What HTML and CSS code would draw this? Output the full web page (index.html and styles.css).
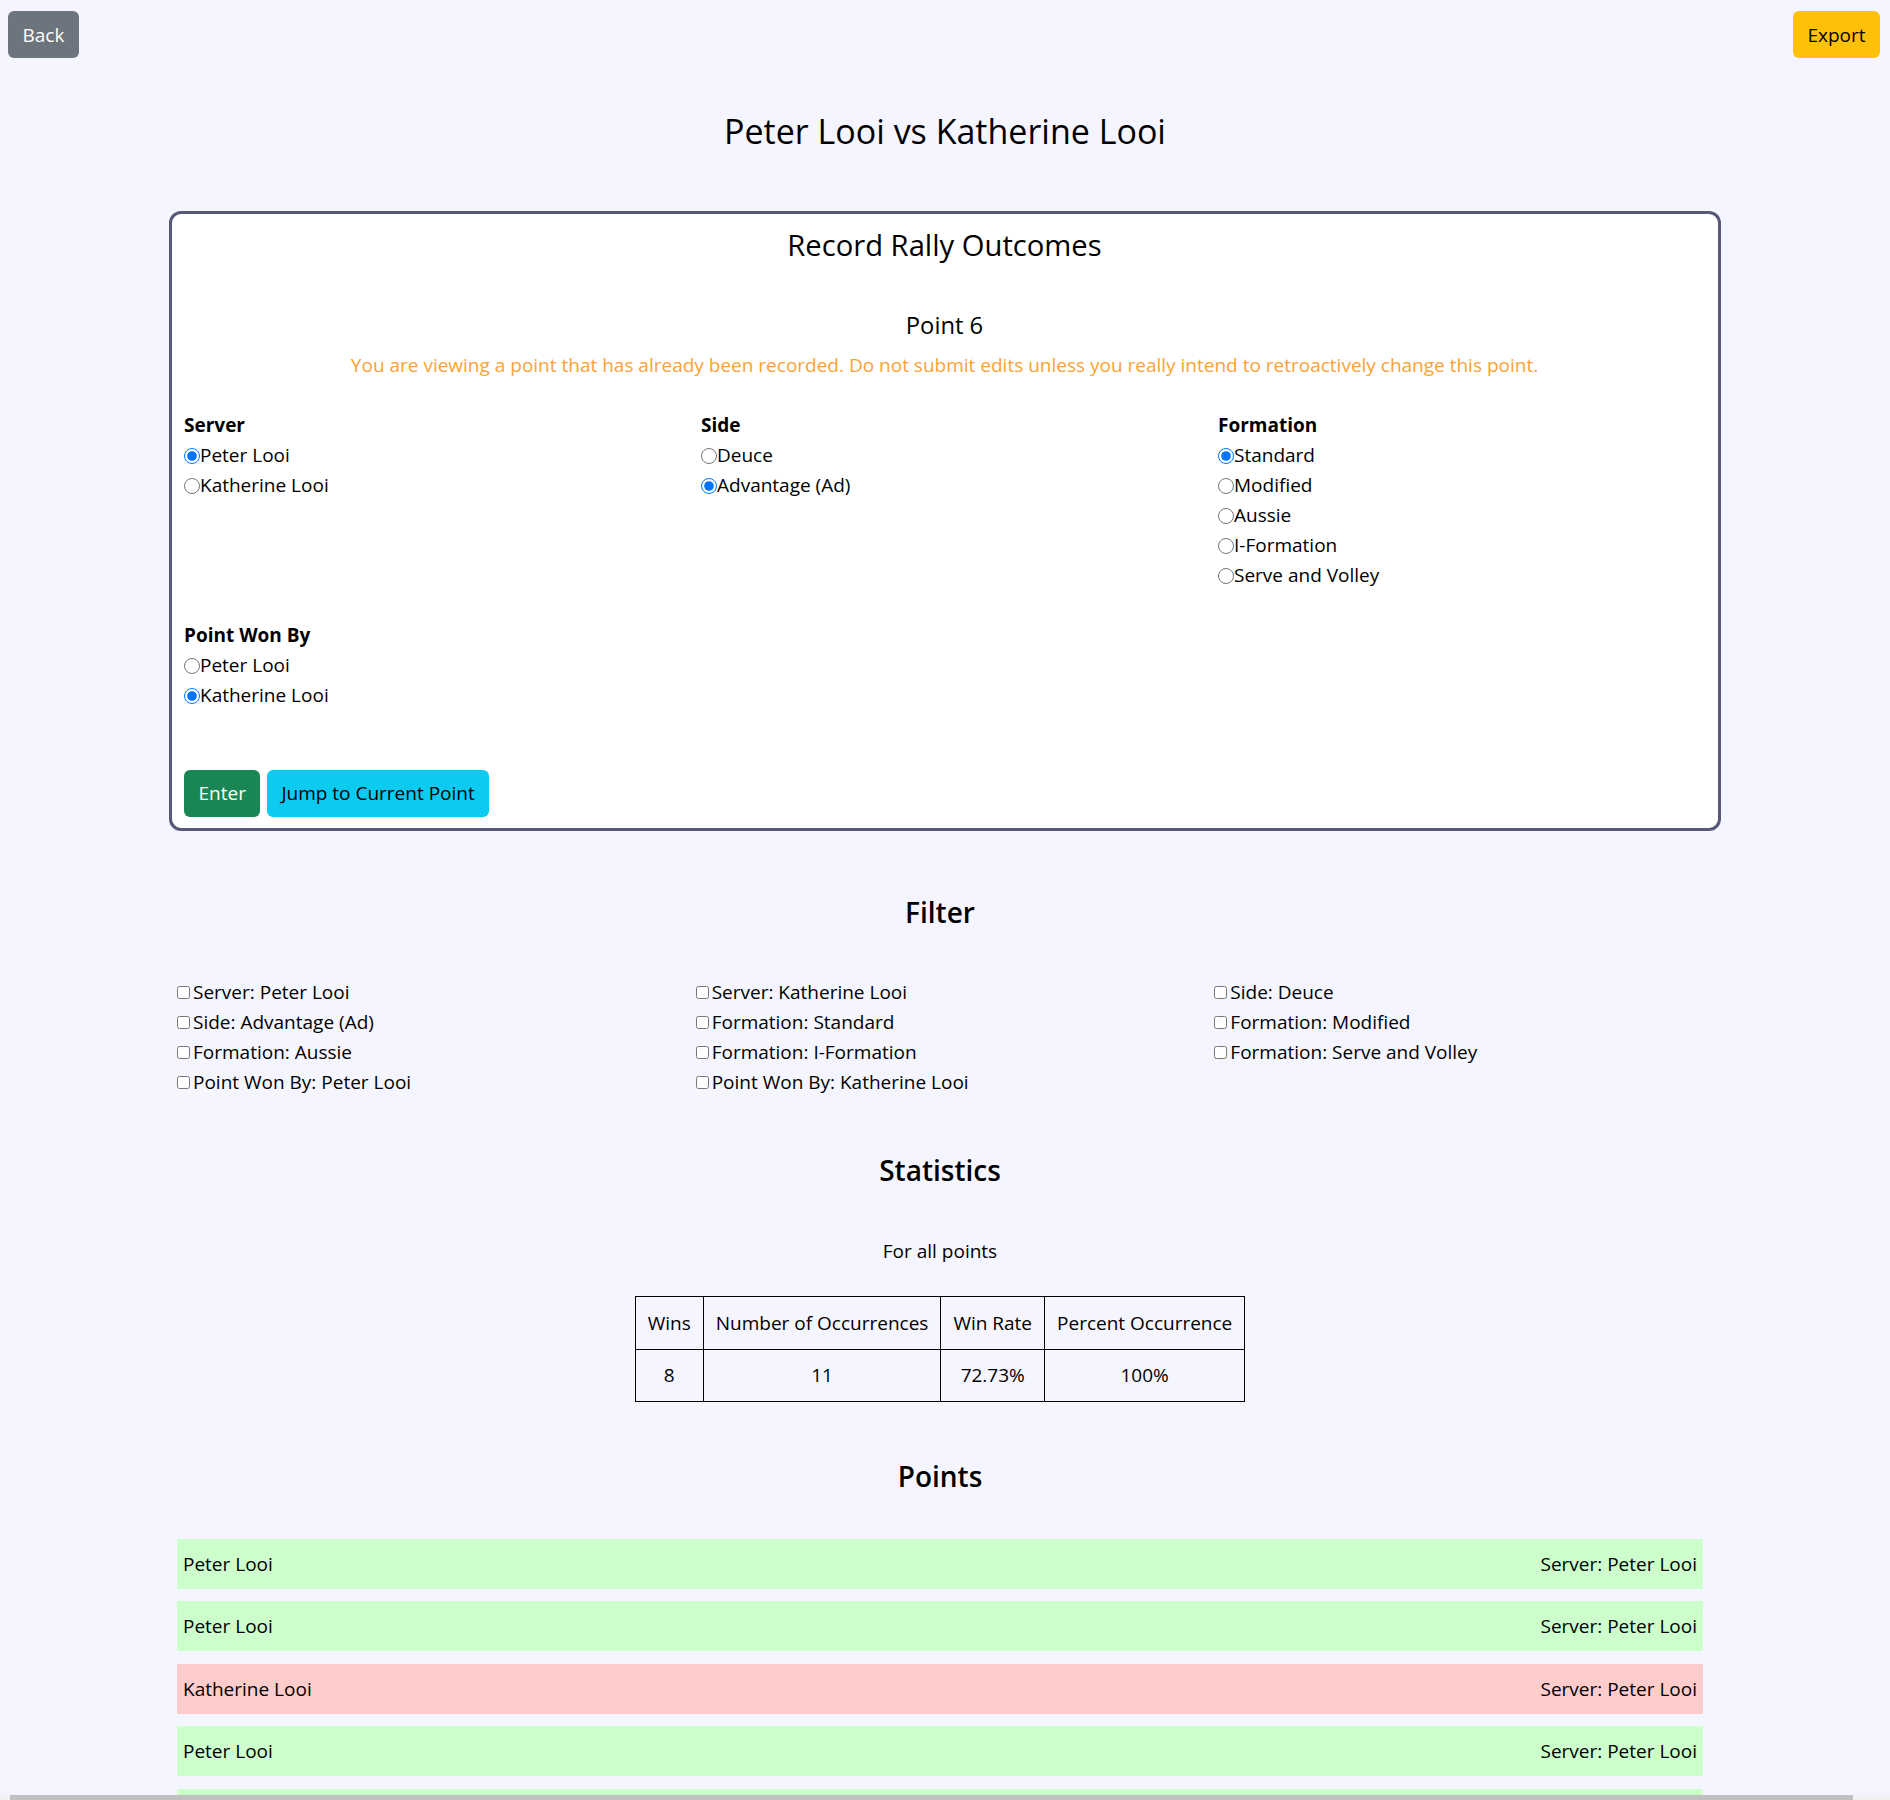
FILE: index.html
```html
<!DOCTYPE html>
<html lang="en">
<head>
<meta charset="utf-8">
<title>Peter Looi vs Katherine Looi</title>
<link rel="stylesheet" href="styles.css">
</head>
<body>
<div class="topbar">
  <button class="btn btn-back">Back</button>
  <button class="btn btn-export">Export</button>
</div>

<h1 class="match-title">Peter Looi vs Katherine Looi</h1>

<section class="record-card">
  <h2 class="card-title">Record Rally Outcomes</h2>
  <h3 class="point-title">Point 6</h3>
  <p class="warning">You are viewing a point that has already been recorded. Do not submit edits unless you really intend to retroactively change this point.</p>

  <div class="field-grid">
    <div class="field">
      <div class="field-label">Server</div>
      <label class="opt"><input type="radio" name="server" checked>Peter Looi</label>
      <label class="opt"><input type="radio" name="server">Katherine Looi</label>
    </div>
    <div class="field">
      <div class="field-label">Side</div>
      <label class="opt"><input type="radio" name="side">Deuce</label>
      <label class="opt"><input type="radio" name="side" checked>Advantage (Ad)</label>
    </div>
    <div class="field">
      <div class="field-label">Formation</div>
      <label class="opt"><input type="radio" name="formation" checked>Standard</label>
      <label class="opt"><input type="radio" name="formation">Modified</label>
      <label class="opt"><input type="radio" name="formation">Aussie</label>
      <label class="opt"><input type="radio" name="formation">I-Formation</label>
      <label class="opt"><input type="radio" name="formation">Serve and Volley</label>
    </div>
  </div>

  <div class="field won-by">
    <div class="field-label">Point Won By</div>
    <label class="opt"><input type="radio" name="won">Peter Looi</label>
    <label class="opt"><input type="radio" name="won" checked>Katherine Looi</label>
  </div>

  <div class="actions">
    <button class="btn btn-enter">Enter</button>
    <button class="btn btn-jump">Jump to Current Point</button>
  </div>
</section>

<main class="lower">
  <h2 class="section-title filter-title">Filter</h2>
  <div class="filter-grid">
    <label class="opt"><input type="checkbox">Server: Peter Looi</label>
    <label class="opt"><input type="checkbox">Server: Katherine Looi</label>
    <label class="opt"><input type="checkbox">Side: Deuce</label>
    <label class="opt"><input type="checkbox">Side: Advantage (Ad)</label>
    <label class="opt"><input type="checkbox">Formation: Standard</label>
    <label class="opt"><input type="checkbox">Formation: Modified</label>
    <label class="opt"><input type="checkbox">Formation: Aussie</label>
    <label class="opt"><input type="checkbox">Formation: I-Formation</label>
    <label class="opt"><input type="checkbox">Formation: Serve and Volley</label>
    <label class="opt"><input type="checkbox">Point Won By: Peter Looi</label>
    <label class="opt"><input type="checkbox">Point Won By: Katherine Looi</label>
  </div>

  <h2 class="section-title stats-title">Statistics</h2>
  <p class="stats-caption">For all points</p>
  <table class="stats-table">
    <tr><td>Wins</td><td>Number of Occurrences</td><td>Win Rate</td><td>Percent Occurrence</td></tr>
    <tr><td>8</td><td>11</td><td>72.73%</td><td>100%</td></tr>
  </table>

  <h2 class="section-title points-title">Points</h2>
  <div class="points">
    <div class="point-row won"><span>Peter Looi</span><span>Server: Peter Looi</span></div>
    <div class="point-row won"><span>Peter Looi</span><span>Server: Peter Looi</span></div>
    <div class="point-row lost"><span>Katherine Looi</span><span>Server: Peter Looi</span></div>
    <div class="point-row won"><span>Peter Looi</span><span>Server: Peter Looi</span></div>
    <div class="point-row won"><span>Peter Looi</span><span>Server: Peter Looi</span></div>
    <div class="point-row lost"><span>Katherine Looi</span><span>Server: Peter Looi</span></div>
    <div class="point-row won"><span>Peter Looi</span><span>Server: Peter Looi</span></div>
    <div class="point-row won"><span>Peter Looi</span><span>Server: Peter Looi</span></div>
    <div class="point-row lost"><span>Katherine Looi</span><span>Server: Peter Looi</span></div>
    <div class="point-row won"><span>Peter Looi</span><span>Server: Peter Looi</span></div>
    <div class="point-row won"><span>Peter Looi</span><span>Server: Peter Looi</span></div>
  </div>
</main>

<div class="fake-scrollbar"><div class="fake-thumb"></div></div>
</body>
</html>
```

FILE: styles.css
```css
* { box-sizing: border-box; }

body {
  margin: 0;
  background: #f5f5ff;
  color: #212529;
  font-family: "Open Sans", "Noto Sans", sans-serif;
  font-size: 19px;
  line-height: 30px;
  padding-bottom: 40px;
}

.btn {
  font-family: inherit;
  font-size: 19px;
  line-height: 30px;
  padding: 7.5px 13.5px;
  border: 1px solid transparent;
  border-radius: 6px;
  cursor: pointer;
}

.topbar {
  display: flex;
  justify-content: space-between;
  padding: 11px 10px 0 8px;
}

.btn-back { background: #6c757d; color: #fff; }
.btn-export { background: #ffc107; color: #000; }
.btn-enter { background: #198754; color: #fff; }
.btn-jump { background: #0dcaf0; color: #000; }

.match-title {
  margin: 52px 0 0;
  text-align: center;
  font-size: 34px;
  line-height: 42px;
  font-weight: 500;
  color: #000;
}

.record-card {
  width: 1552px;
  margin: 59px auto 0;
  background: #fff;
  border: 3px solid #585879;
  border-radius: 12px;
  padding: 12.5px 13px 11px 12px;
}

.card-title {
  margin: 0 0 10px;
  text-align: center;
  font-size: 29.2px;
  line-height: 36px;
  font-weight: 500;
  color: #000;
}

.point-title {
  margin: 47px 0 10px;
  text-align: center;
  font-size: 23.75px;
  line-height: 30px;
  font-weight: 500;
  color: #000;
}

.warning {
  margin: 0 0 30px;
  text-align: center;
  color: #fba234;
}

.field-grid {
  display: grid;
  grid-template-columns: repeat(3, 1fr);
  column-gap: 30px;
}

.field { display: flex; flex-direction: column; align-items: flex-start; }

.field-label { font-weight: 700; color: #000; }

.opt { color: #000; }

.opt input[type="radio"] {
  width: 16px;
  height: 16px;
  margin: 0;
  vertical-align: -2px;
}

.opt input[type="checkbox"] {
  width: 13px;
  height: 13px;
  margin: 0 3px 0 0;
  vertical-align: 0;
}

.won-by { margin-top: 30px; }

.actions {
  display: flex;
  gap: 6.5px;
  margin-top: 60px;
}

.lower {
  width: 1526px;
  margin: 0 0 0 177px;
}

.section-title {
  text-align: center;
  font-size: 28px;
  line-height: 42px;
  font-weight: 600;
  color: #000;
  margin: 0;
}

.filter-title { margin-top: 60.5px; }

.filter-grid {
  display: grid;
  grid-template-columns: repeat(3, 1fr);
  column-gap: 30px;
  margin-top: 44px;
}

.stats-title { margin-top: 52px; }

.stats-caption {
  text-align: center;
  margin: 45px 0 30px;
  color: #000;
}

.stats-table {
  border-collapse: collapse;
  margin: 0 auto;
  color: #000;
}

.stats-table td {
  border: 1px solid #000;
  padding: 10.75px 12px;
  text-align: center;
}

.points-title { margin-top: 53px; }

.points {
  display: flex;
  flex-direction: column;
  gap: 12.5px;
  margin-top: 41.5px;
}

.point-row {
  display: flex;
  justify-content: space-between;
  padding: 10px 6px;
  color: #000;
}

.point-row.won { background: #ccffcc; }
.point-row.lost { background: #ffcccc; }

.fake-scrollbar {
  position: fixed;
  left: 0;
  right: 0;
  bottom: 0;
  height: 5px;
  background: #f1f1f1;
}

.fake-thumb {
  margin-left: 10px;
  width: 1843px;
  height: 5px;
  background: #c1c1c1;
}
```
